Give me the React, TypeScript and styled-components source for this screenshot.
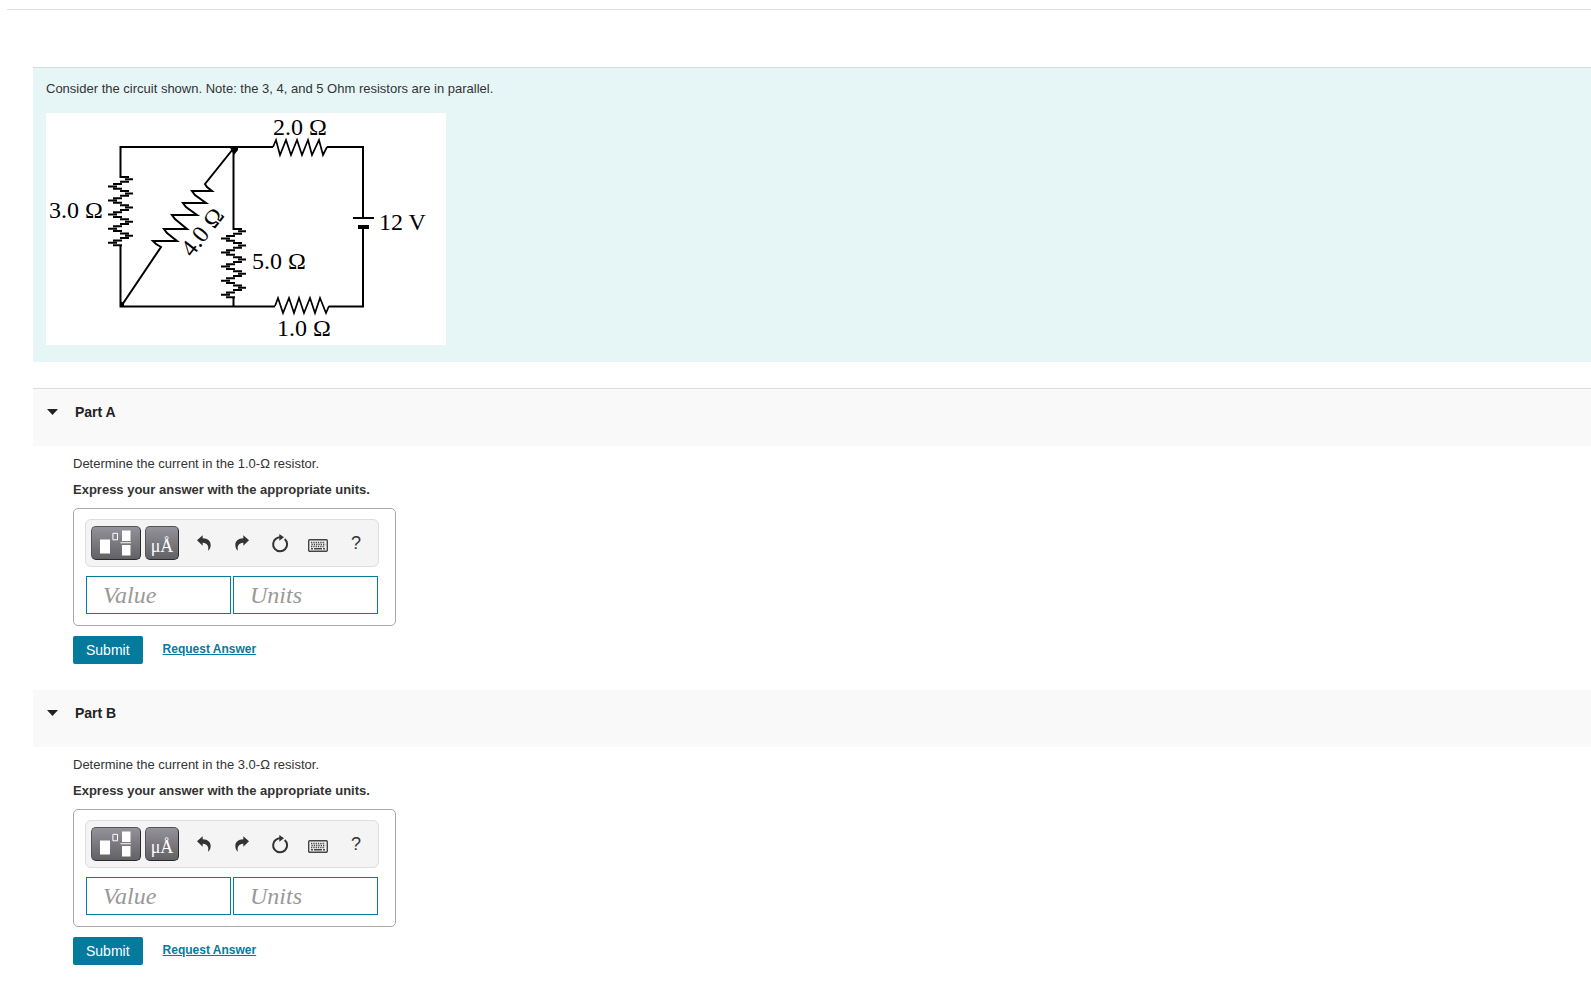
import React, { useId, useState } from 'react';
import styled, { createGlobalStyle } from 'styled-components';

const GlobalStyle = createGlobalStyle`
  *, *::before, *::after { box-sizing: border-box; }
  body {
    margin: 0;
    background: #fff;
    color: #333;
    font-family: "Liberation Sans", Arial, sans-serif;
    font-size: 13px;
    line-height: 16px;
  }
  button, input { font-family: inherit; }
`;

const Page = styled.div`
  padding-top: 9px;
`;

const TopRule = styled.hr`
  height: 1px;
  margin: 0 0 0 7px;
  border: 0;
  background: #dcdcdc;
`;

const Main = styled.main`
  margin: 57px 0 24px 33px;
`;

const Intro = styled.section`
  padding: 13px 13px 17px;
  margin-bottom: 26px;
  border-top: 1px solid #d6dedd;
  background: #e6f6f7;
`;

const Paragraph = styled.p`
  margin: 0 0 16px;
`;

const Figure = styled.figure`
  margin: 0;
  width: 400px;
  max-width: 100%;
  background: #fff;

  svg { display: block; width: 100%; height: auto; }
`;

const Part = styled.section`
  margin-bottom: 26px;
`;

const PartHeader = styled.h2<{ $ruled?: boolean }>`
  margin: 0;
  height: ${p => (p.$ruled ? 58 : 57)}px;
  border-top: ${p => (p.$ruled ? '1px solid #dcdcdc' : '0')};
  background: #f9f9f9;
`;

const Toggle = styled.button`
  display: flex;
  align-items: center;
  gap: 17px;
  padding: 15px 14px;
  border: 0;
  background: none;
  color: #222;
  font-size: 14px;
  font-weight: bold;
  line-height: 16px;
  cursor: pointer;
`;

const Caret = styled.svg<{ $open: boolean }>`
  width: 11px;
  height: 6px;
  transform: ${p => (p.$open ? 'none' : 'rotate(-90deg)')};
`;

const PartBody = styled.div`
  padding: 10px 16px 0 40px;
`;

const Question = styled.p<{ $strong?: boolean }>`
  margin: 0 0 10px;
  font-weight: ${p => (p.$strong ? 'bold' : 'normal')};
`;

const AnswerBox = styled.div`
  display: flex;
  flex-direction: column;
  gap: 9px;
  width: 323px;
  max-width: 100%;
  padding: 10px 16px 11px 11px;
  border: 1px solid #a9a9a9;
  border-radius: 5px;
`;

const Toolbar = styled.div`
  display: flex;
  align-items: center;
  gap: 6px;
  height: 48px;
  padding: 0 5px;
  border: 1px solid #ddd;
  border-radius: 6px;
  background: #f4f4f4;
`;

const ToolGroup = styled.div<{ $gap?: number }>`
  display: flex;
  gap: ${p => p.$gap ?? 0}px;
`;

const DarkButton = styled.button<{ $wide?: boolean }>`
  display: flex;
  align-items: center;
  justify-content: center;
  width: ${p => (p.$wide ? 50 : 34)}px;
  height: 34px;
  padding: ${p => (p.$wide ? 0 : 5)}px 0 0;
  border: 1px solid;
  border-color: #55545a #2a2a2c #2a2a2c #55545a;
  border-radius: 5px;
  background: linear-gradient(#94929a, #626164);
  color: #fff;
  font-family: "Liberation Serif", "Times New Roman", serif;
  font-size: 18px;
  line-height: 20px;
  cursor: pointer;
`;

const ToolButton = styled.button`
  display: flex;
  align-items: center;
  justify-content: center;
  width: 38px;
  height: 34px;
  padding: 0;
  border: 0;
  background: none;
  color: #333;
  font-size: 18px;
  cursor: pointer;
`;

const Fields = styled.div`
  display: flex;
  gap: 2px;
  padding: 0 1px;
`;

const Field = styled.input`
  flex: 1;
  min-width: 0;
  height: 38px;
  padding: 0 16px;
  border: 1px solid #047a9c;
  border-radius: 0;
  background: #fff;
  color: #333;
  font-family: "Liberation Serif", "Times New Roman", serif;
  font-size: 24px;
  font-style: italic;

  &::placeholder { color: #999; opacity: 1; }
`;

const Actions = styled.div`
  display: flex;
  gap: 20px;
  align-items: flex-start;
  margin-top: 10px;
`;

const Submit = styled.button`
  height: 28px;
  padding: 0 13px;
  border: 0;
  border-radius: 2px;
  background: #047a9c;
  color: #fff;
  font-size: 14px;
  line-height: 16px;
  cursor: pointer;
`;

const RequestLink = styled.a`
  padding-top: 5px;
  color: #047a9c;
  font-size: 12px;
  font-weight: bold;
  text-decoration: underline;
`;

/* Horizontal rungs, as offsets from the wire, repeated down a vertical resistor. */
const RUNGS = [
  [-1, 8],
  [4, 12],
  [-1, 8],
  [-8, 1],
  [-13, -4],
  [-8, 1],
];

/* A vertical resistor drawn as a stack of overlapping rungs. */
function steppedResistor(cx: number, top: number, step: number) {
  let d = '';
  for (let k = 0; k < 30; k++) {
    const [from, to] = RUNGS[k % 6];
    const y = top + k * step;
    d += `M${cx + from} ${y}H${cx + to}`;
  }
  return d;
}

const CircuitText = styled.text`
  fill: #000;
  stroke: none;
  font-family: "Liberation Serif", "Times New Roman", serif;
  font-size: 24px;
`;

function Circuit() {
  return (
    <svg viewBox="0 0 400 232" role="img" aria-label="Circuit with a 12 V battery and five resistors" fill="none" stroke="#000" strokeWidth="2">
      <path d="M74.500 65 V34 H227 M281 34 H317 V104" />
      <path d="M317 115 V193.500 H283 M229 193.500 H74.500 V133" />
      <path d="M227 34 L230 27 L234 42 L240 27 L245 42 L251 27 L256 42 L262 27 L266 42 L273 27 L277 42 L281 34" strokeWidth="1.7" />
      <path d="M229 193 L232 185 L237 200 L243 185 L248 200 L253 185 L258 200 L264 185 L269 200 L274 185 L280 200 L283 193" strokeWidth="1.7" />
      <path d="M307 105 H328" />
      <path d="M312 114 H323" strokeWidth="4" />
      <path d="M187.500 34 V117 M187.500 184 V193" />
      <path d={steppedResistor(75, 64, 2.35)} strokeWidth="2" />
      <path d={steppedResistor(188, 116, 2.35)} strokeWidth="2" />
      <path d="M187 36 L159 71 L161 74 L166 78 H146 L149 82 L160 90 H137 L140 94 L151 102 H126 L129 106 L141 116 H118 L121 120 L131 128 H107 L110 131 L115 134 L76 192" />
      <path d="M183 33 H192 V37 L188 42 Z M74 188 L78 190 V194 H74 Z" fill="#000" stroke="none" />
      <CircuitText x="227" y="22">2.0 Ω</CircuitText>
      <CircuitText x="3" y="105">3.0 Ω</CircuitText>
      <CircuitText x="333" y="117">12 V</CircuitText>
      <CircuitText x="206" y="156">5.0 Ω</CircuitText>
      <CircuitText x="231" y="223">1.0 Ω</CircuitText>
      <CircuitText transform="translate(146 145) rotate(-52)">4.0 Ω</CircuitText>
    </svg>
  );
}

const TemplatesIcon = () => (
  <svg width="33" height="26" viewBox="0 0 33 26" fill="#fff" aria-hidden="true">
    <path d="M0 9.500h10v14H0zM22 0.500h8.500v10.500H22zM20.500 12.200h10.500v1H20.500zM22 15h8.500v10.500H22z" />
    <path d="M12.900 3.300h4.600v6.500h-4.600z" fill="none" stroke="#fff" />
  </svg>
);

const UndoIcon = ({ flipped }: { flipped?: boolean }) => (
  <svg width="14" height="16" viewBox="0 0 42 48" fill="#333" aria-hidden="true">
    <path
      transform={flipped ? 'translate(42 0) scale(-1 1)' : undefined}
      d="M0 16 L17 1 V10 C33 11 41 18 41 30 C41 38 38 44 33 47 C36 33 32 24 17 23 V32 Z"
    />
  </svg>
);

const ResetIcon = () => (
  <svg width="18" height="20" viewBox="0 0 54 60" aria-hidden="true">
    <path d="M41 18 A21 21 0 1 1 15 17 Q20 13 28 13" fill="none" stroke="#333" strokeWidth="6" />
    <path d="M25 3 L39 13 L25 23 Z" fill="#333" />
  </svg>
);

const KeyboardIcon = () => (
  <svg width="20" height="20" viewBox="0 0 20 20" fill="none" stroke="#444" aria-hidden="true">
    <rect x="0.700" y="6.700" width="18.600" height="11.600" rx="1" strokeWidth="1.400" />
    <path d="M3 9.500h14M3.500 11.500h14M3 13.500h14" strokeDasharray="1.300 1" strokeWidth="1.400" />
    <path d="M3 15.700h2M6 15.700h8M15 15.700h2" strokeWidth="1.400" />
  </svg>
);

interface PartProps {
  title: string;
  question: string;
  ruled?: boolean;
}

function QuestionPart({ title, question, ruled }: PartProps) {
  const [open, setOpen] = useState(true);
  const bodyId = useId();
  return (
    <Part>
      <PartHeader $ruled={ruled}>
        <Toggle type="button" aria-expanded={open} aria-controls={bodyId} onClick={() => setOpen(!open)}>
          <Caret $open={open} viewBox="0 0 11 6" aria-hidden="true">
            <path d="M0 0h11L5.500 6z" fill="#222" />
          </Caret>
          {title}
        </Toggle>
      </PartHeader>
      {open && (
        <PartBody id={bodyId}>
          <Question>{question}</Question>
          <Question $strong>Express your answer with the appropriate units.</Question>
          <AnswerBox>
            <Toolbar role="toolbar" aria-label="Answer tools">
              <ToolGroup $gap={4}>
                <DarkButton type="button" $wide aria-label="Templates"><TemplatesIcon /></DarkButton>
                <DarkButton type="button" aria-label="Units">μÅ</DarkButton>
              </ToolGroup>
              <ToolGroup>
                <ToolButton type="button" aria-label="Undo"><UndoIcon /></ToolButton>
                <ToolButton type="button" aria-label="Redo"><UndoIcon flipped /></ToolButton>
                <ToolButton type="button" aria-label="Reset"><ResetIcon /></ToolButton>
                <ToolButton type="button" aria-label="Keyboard shortcuts"><KeyboardIcon /></ToolButton>
                <ToolButton type="button" aria-label="Help">?</ToolButton>
              </ToolGroup>
            </Toolbar>
            <Fields>
              <Field type="text" placeholder="Value" aria-label={`${title} value`} />
              <Field type="text" placeholder="Units" aria-label={`${title} units`} />
            </Fields>
          </AnswerBox>
          <Actions>
            <Submit type="button">Submit</Submit>
            <RequestLink href="#request-answer">Request Answer</RequestLink>
          </Actions>
        </PartBody>
      )}
    </Part>
  );
}

export default function App() {
  return (
    <Page>
      <GlobalStyle />
      <TopRule />
      <Main>
        <Intro>
          <Paragraph>Consider the circuit shown. Note: the 3, 4, and 5 Ohm resistors are in parallel.</Paragraph>
          <Figure><Circuit /></Figure>
        </Intro>
        <QuestionPart title="Part A" question="Determine the current in the 1.0-Ω resistor." ruled />
        <QuestionPart title="Part B" question="Determine the current in the 3.0-Ω resistor." />
      </Main>
    </Page>
  );
}
